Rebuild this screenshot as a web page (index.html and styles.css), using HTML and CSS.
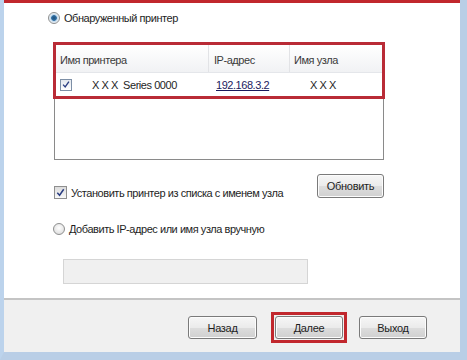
FILE: index.html
```html
<html>
<head>
<meta charset="utf-8">
<link rel="stylesheet" href="styles.css">
</head>
<body>
	<div class="window">
		<div class="main">
			<div class="opt opt-found">
				<span class="radio on"></span>
				<label>Обнаруженный принтер</label>
			</div>

			<div class="listbox">
				<div class="hl">
					<div class="grid head">
						<div class="cell c1">Имя принтера</div>
						<div class="cell c2">IP-адрес</div>
						<div class="cell c3">Имя узла</div>
					</div>
					<div class="grid row">
						<div class="cell c1">
							<span class="check small"><svg viewBox="0 0 12 12"><path d="M2.5 6.2 L5 9 L9.5 2.5" /></svg></span>
							<span class="pname">X X X&nbsp; Series 0000</span>
						</div>
						<div class="cell c2"><a href="#" class="ip">192.168.3.2</a></div>
						<div class="cell c3 host">X X X</div>
					</div>
				</div>
			</div>

			<div class="opt opt-check">
				<span class="check"><svg viewBox="0 0 12 12"><path d="M2.5 6.2 L5 9 L9.5 2.5" /></svg></span>
				<label>Установить принтер из списка с именем узла</label>
				<button class="btn btn-refresh">Обновить</button>
			</div>

			<div class="opt opt-manual">
				<span class="radio"></span>
				<label>Добавить IP-адрес или имя узла вручную</label>
			</div>

			<input type="text" class="addr" disabled>
		</div>

		<div class="footer">
			<button class="btn btn-back">Назад</button>
			<span class="mark"><button class="btn">Далее</button></span>
			<button class="btn">Выход</button>
		</div>
	</div>
</body>
</html>
```

FILE: styles.css
```css
body {
	margin: 0;
	font-family: "Liberation Sans", Arial, sans-serif;
	font-size: 11px;
	letter-spacing: -0.45px;
	color: #1e1e1e;
}

.window {
	width: 456px;
	height: 352px;
	border-left: 4px solid #bcd3ec;
	border-right: 7px solid #b9cee6;
	border-bottom: 8px solid #b9cee6;
	display: flex;
	flex-direction: column;
}

.main {
	background: #ffffff;
	border-top: 3px solid #c1272d;
	height: 298px;
	flex: none;
	padding-left: 44px;
	box-sizing: border-box;
	display: flex;
	flex-direction: column;
	align-items: flex-start;
}

.opt {
	display: flex;
	align-items: center;
	height: 16px;
}

.opt label {
	margin-left: 4px;
}

.opt-found {
	margin-top: 7px;
}

.opt-check {
	margin-top: 24px;
	margin-left: 6px;
	width: 330px;
}

.opt-check label {
	margin-left: 4px;
	margin-top: 2px;
}

.opt-manual {
	margin-top: 21px;
	margin-left: 5px;
}

.radio {
	width: 10px;
	height: 10px;
	border-radius: 50%;
	border: 1px solid #8e8f8f;
	background: radial-gradient(circle at 50% 40%, #ffffff 0%, #d6d6d6 100%);
	box-sizing: content-box;
	display: inline-block;
}

.radio.on {
	background: radial-gradient(circle, #1d4f7a 0%, #2f6ea3 35%, #bfd7ea 45%, #f3f6f9 75%);
}

.check {
	width: 11px;
	height: 11px;
	border: 1px solid #8f8f8f;
	background: linear-gradient(#dcdcdc, #f8f8f8);
	display: inline-flex;
	align-items: center;
	justify-content: center;
}

.check svg {
	width: 11px;
	height: 11px;
}

.check path {
	fill: none;
	stroke: #2a3d82;
	stroke-width: 1.6;
}

/* printer list */
.listbox {
	margin-top: 18px;
	margin-left: 6px;
	width: 330px;
	height: 116px;
	border: 1px solid #8a8a8a;
	border-top-color: #bdbdbd;
	box-sizing: border-box;
}

.hl {
	margin: -3px -2px 0 -2px;
	border: 3px solid #b92b36;
	background: #ffffff;
}

.grid {
	display: grid;
	grid-template-columns: 153px 81px 1fr;
	align-items: center;
}

.head {
	height: 27px;
	background: linear-gradient(#ffffff, #f1f2f4);
	border-bottom: 1px solid #e4e6ea;
	color: #3b3b3b;
}

.head .cell {
	height: 27px;
	line-height: 27px;
	padding-left: 4px;
	padding-top: 2px;
	box-sizing: border-box;
}

.head .c1,
.head .c2 {
	border-right: 1px solid #e2e3e6;
}

.head .c2 {
	padding-left: 5px;
}

.row {
	height: 23px;
}

.row .c1 {
	display: flex;
	align-items: center;
	padding-left: 4px;
}

.row .c2 {
	padding-left: 7px;
}

.check.small {
	width: 10px;
	height: 10px;
	border-color: #7d8fa6;
	background: linear-gradient(#e4e8ee, #ffffff);
}

.pname {
	margin-left: 20px;
}

.ip {
	color: #1b1b5e;
	text-decoration: underline;
}

.host {
	padding-left: 20px;
}

/* buttons */
.btn {
	font-family: "Liberation Sans", Arial, sans-serif;
	font-size: 11px;
	letter-spacing: -0.3px;
	color: #1e1e1e;
	width: 68px;
	height: 23px;
	border: 1px solid #7a7a7a;
	border-radius: 3px;
	background: linear-gradient(#f6f6f6 0%, #ebebeb 50%, #dddddd 51%, #d0d0d0 100%);
	box-shadow: inset 0 0 0 1px #fcfcfc;
	padding: 0;
}

.btn-refresh {
	margin-left: auto;
	height: 24px;
	width: 67px;
	margin-top: -13px;
}

.addr {
	margin-top: 22px;
	margin-left: 15px;
	width: 245px;
	height: 25px;
	border: 1px solid #d5d5d5;
	background: #f0f0f0;
}

/* footer */
.footer {
	flex: 1;
	background: #f0f0f0;
	border-top: 2px solid #c4c4c4;
	display: flex;
	justify-content: flex-end;
	align-items: flex-start;
	padding: 16px 33px 0 0;
}

.btn-back {
	width: 69px;
	margin-right: 14px;
}

.mark {
	border: 3px solid #c1272d;
	padding: 1px;
	margin-top: -4px;
	margin-right: 12px;
	display: flex;
}
```
